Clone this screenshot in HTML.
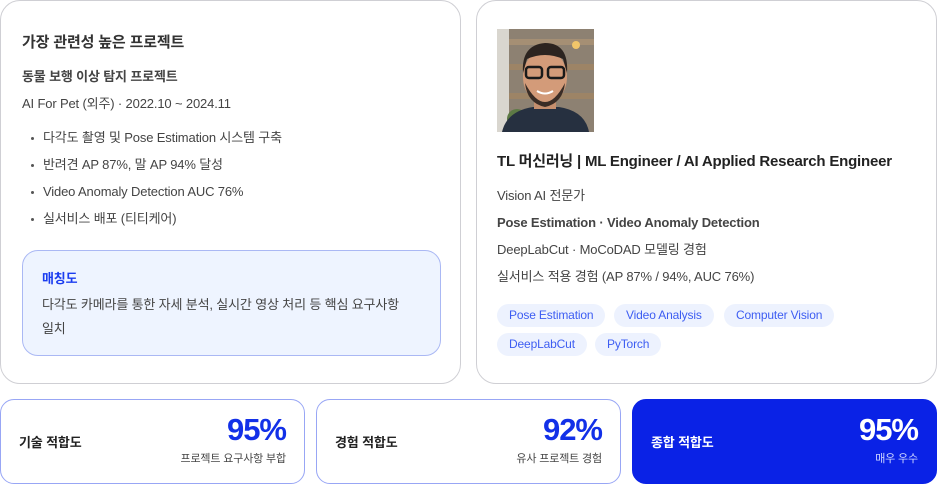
<!DOCTYPE html>
<html><head><meta charset="utf-8"><style>
*{margin:0;padding:0;box-sizing:border-box}
body{width:937px;height:484px;background:#fff;font-family:"Liberation Sans","Noto Sans CJK KR",sans-serif;color:#333;position:relative;overflow:hidden;letter-spacing:-0.15px}
.card{position:absolute;border:1px solid #cfcfd4;border-radius:20px;background:#fff}
.a{position:absolute;white-space:nowrap;line-height:18px}
.li{font-size:13px;color:#444}
.li:before{content:"";position:absolute;left:-12px;top:8px;width:3px;height:3px;border-radius:50%;background:#555}
.tag{position:absolute;height:23px;border-radius:12px;background:#edf2fe;color:#3d5df2;font-size:12px;line-height:23px;padding:0 12px}
.sc{position:absolute;top:399px;width:305px;height:85px;border:1px solid #98a6f5;border-radius:14px;background:#fff}
.sc .l{position:absolute;left:18px;top:34px;font-size:13px;font-weight:bold;color:#222;line-height:18px}
.sc .p{position:absolute;right:18px;top:13px;font-size:31px;font-weight:bold;color:#1230e8;letter-spacing:-1px;line-height:34px}
.sc .s{position:absolute;right:18px;top:51px;font-size:11px;color:#444;line-height:16px}
</style></head><body>
<div class="card" style="left:0;top:0;width:461px;height:384px">
<div class="a" style="left:21px;top:33px;font-size:15px;font-weight:bold;color:#333">가장 관련성 높은 프로젝트</div>
<div class="a" style="left:21px;top:67px;font-size:13px;font-weight:bold;color:#444">동물 보행 이상 탐지 프로젝트</div>
<div class="a" style="left:21px;top:94px;font-size:13px;color:#444">AI For Pet (외주) · 2022.10 ~ 2024.11</div>
<div class="a li" style="left:42px;top:128px">다각도 촬영 및 Pose Estimation 시스템 구축</div>
<div class="a li" style="left:42px;top:155px">반려견 AP 87%, 말 AP 94% 달성</div>
<div class="a li" style="left:42px;top:182px">Video Anomaly Detection AUC 76%</div>
<div class="a li" style="left:42px;top:209px">실서비스 배포 (티티케어)</div>
<div class="a" style="left:21px;top:249px;width:419px;height:106px;background:#eef4ff;border:1px solid #aab8f4;border-radius:16px">
<div class="a" style="left:19px;top:19px;font-size:13px;font-weight:bold;color:#1a3cf0">매칭도</div>
<div class="a" style="left:19px;top:45px;font-size:13px;color:#444">다각도 카메라를 통한 자세 분석, 실시간 영상 처리 등 핵심 요구사항</div>
<div class="a" style="left:19px;top:69px;font-size:13px;color:#444">일치</div>
</div>
</div>
<div class="card" style="left:476px;top:0;width:461px;height:384px">
<svg class="a" style="left:20px;top:28px" width="97" height="103" viewBox="0 0 97 103">
<rect width="97" height="103" fill="#8d8172"/>
<rect x="0" y="0" width="12" height="103" fill="#d9d6cf"/>
<rect x="12" y="10" width="85" height="6" fill="#a58f74"/>
<rect x="12" y="35" width="85" height="6" fill="#9d8466"/>
<rect x="12" y="64" width="85" height="6" fill="#9d8466"/>
<circle cx="79" cy="16" r="4" fill="#f2c66a"/>
<circle cx="20" cy="90" r="10" fill="#5d7a45"/>
<path d="M5 103 Q10 82 36 78 L62 78 Q88 82 92 103Z" fill="#263040"/>
<rect x="37" y="64" width="22" height="16" fill="#c58f6e"/>
<ellipse cx="48" cy="48" rx="22" ry="27" fill="#d39b79"/>
<path d="M26 44 Q24 16 48 14 Q72 14 70 44 L66 30 Q48 22 30 30Z" fill="#2c2420"/>
<path d="M28 54 Q48 92 68 54 Q66 74 48 78 Q30 74 28 54Z" fill="#3a2d26"/>
<rect x="29" y="38" width="16" height="11" rx="3" fill="none" stroke="#1a1a1a" stroke-width="2.5"/>
<rect x="51" y="38" width="16" height="11" rx="3" fill="none" stroke="#1a1a1a" stroke-width="2.5"/>
<path d="M40 62 Q48 67 56 62" stroke="#fff" stroke-width="2" fill="none"/>
</svg>
<div class="a" style="left:20px;top:152px;font-size:15px;font-weight:bold;color:#222;letter-spacing:-0.2px">TL 머신러닝 | ML Engineer / AI Applied Research Engineer</div>
<div class="a" style="left:20px;top:186px;font-size:13px;color:#444">Vision AI 전문가</div>
<div class="a" style="left:20px;top:213px;font-size:13px;font-weight:bold;color:#444">Pose Estimation · Video Anomaly Detection</div>
<div class="a" style="left:20px;top:240px;font-size:13px;color:#444">DeepLabCut · MoCoDAD 모델링 경험</div>
<div class="a" style="left:20px;top:267px;font-size:13px;color:#444">실서비스 적용 경험 (AP 87% / 94%, AUC 76%)</div>
<div class="tag" style="left:20px;top:303px">Pose Estimation</div>
<div class="tag" style="left:137px;top:303px">Video Analysis</div>
<div class="tag" style="left:247px;top:303px">Computer Vision</div>
<div class="tag" style="left:20px;top:332px">DeepLabCut</div>
<div class="tag" style="left:118px;top:332px">PyTorch</div>
</div>
<div class="sc" style="left:0"><div class="l">기술 적합도</div><div class="p">95%</div><div class="s">프로젝트 요구사항 부합</div></div>
<div class="sc" style="left:316px"><div class="l">경험 적합도</div><div class="p">92%</div><div class="s">유사 프로젝트 경험</div></div>
<div class="sc" style="left:632px;background:#0a22e6;border-color:#0a22e6"><div class="l" style="color:#fff">종합 적합도</div><div class="p" style="color:#fff">95%</div><div class="s" style="color:#d0d8ff">매우 우수</div></div>
</body></html>
